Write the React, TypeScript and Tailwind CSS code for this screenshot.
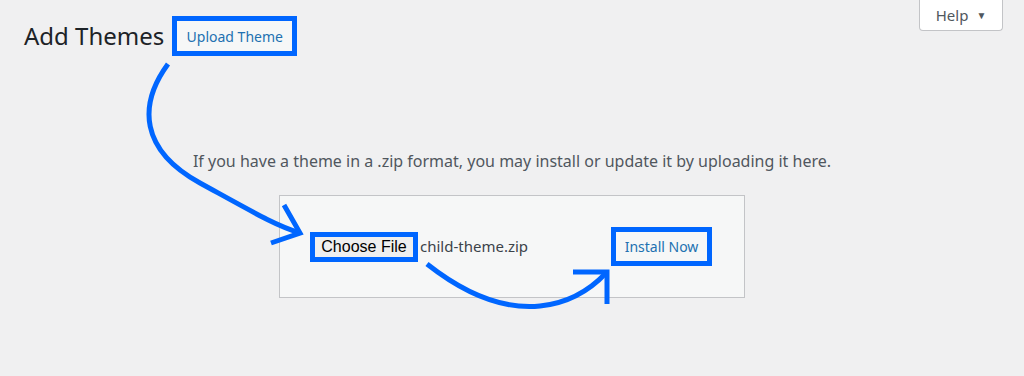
import React from "react"

const wpFont = { fontFamily: '"Noto Sans", "Open Sans", sans-serif' }

function Arrows() {
  // annotation arrows drawn over the page
  return (
    <svg
      className="pointer-events-none absolute inset-0"
      width="1024"
      height="376"
      viewBox="0 0 1024 376"
      fill="none"
    >
      <g stroke="#0066ff" strokeWidth="5" strokeLinejoin="miter">
        <path d="M168 64 C138 105, 140 150, 200 183 S275 225, 300 233" />
        <path d="M284 205 L300 233 L271 243" />
        <path d="M427 264 C460 290, 500 310, 540 306 C570 303, 590 290, 606 273" />
        <path d="M573 272 L607 272 L607 304" />
      </g>
    </svg>
  )
}

export default function App() {
  return (
    <div className="relative h-[376px] w-[1024px] overflow-hidden bg-[#f0f0f1]" style={wpFont}>
      {/* Top row: title + help tab */}
      <div className="flex items-start justify-between">
        <div className="flex items-center gap-[8px] pl-[24px] pt-[16px]">
          <h1 className="text-[24px] font-normal leading-[40px] text-[#1d2327]">Add Themes</h1>
          <div className="border-[5px] border-[#0066ff]">
            <button className="flex h-[30px] w-[115px] items-center justify-center bg-[#f6f7f7] text-[14px] text-[#2271b1]">
              Upload Theme
            </button>
          </div>
        </div>
        <button className="mr-[21px] flex h-[31px] w-[84px] items-center justify-center gap-[8px] rounded-b-[4px] border border-t-0 border-[#c3c4c7] bg-white text-[15px] text-[#50575e]">
          <span>Help</span>
          <span className="text-[10px] text-[#50575e]">▼</span>
        </button>
      </div>

      <p className="mt-[93px] text-center text-[16px] leading-[24px] text-[#50575e]">
        If you have a theme in a .zip format, you may install or update it by uploading it here.
      </p>

      <div className="mx-auto mt-[22px] flex h-[103px] w-[466px] items-center justify-between border border-[#c3c4c7] bg-[#f6f7f7] pl-[30px] pr-[32px]">
        <div className="flex items-center">
          <div className="border-[5px] border-[#0066ff]">
            <div
              className="flex h-[20px] w-[98px] items-center justify-center bg-[#efefef] text-[16px] text-black"
              style={{ fontFamily: '"Liberation Sans", Arial, sans-serif' }}
            >
              Choose File
            </div>
          </div>
          <span className="ml-[2px] text-[15px] text-[#3c434a]">child-theme.zip</span>
        </div>
        <div className="border-[5px] border-[#0066ff]">
          <button className="flex h-[29px] w-[91px] items-center justify-center bg-[#f6f7f7] text-[14px] text-[#2271b1]">
            Install Now
          </button>
        </div>
      </div>

      <Arrows />
    </div>
  )
}
